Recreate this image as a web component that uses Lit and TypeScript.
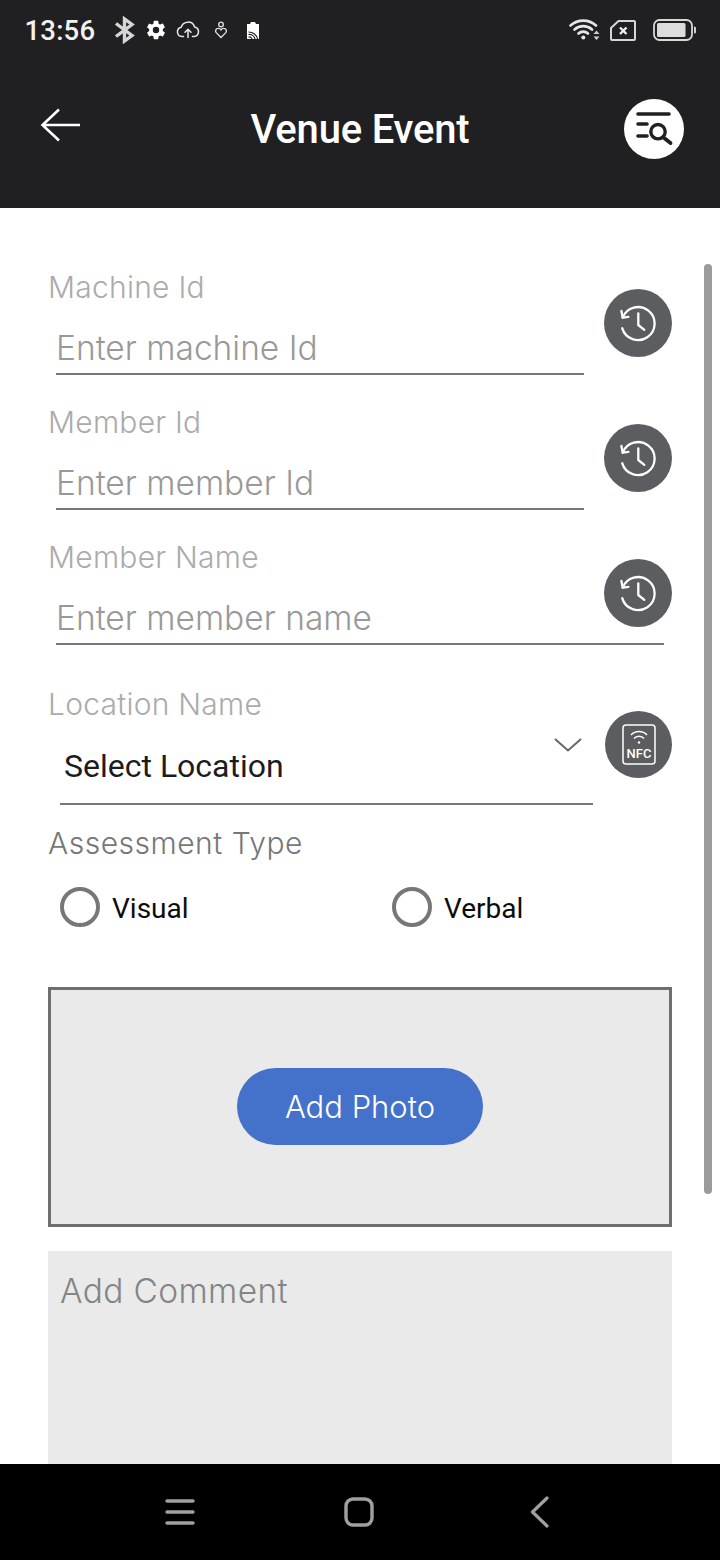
import { LitElement, html, css } from "lit";
import { customElement } from "lit/decorators.js";

const historyIcon = html`<svg class="ico" viewBox="0 0 40 40" width="40" height="40" fill="none" stroke="#fff" stroke-width="2.300" stroke-linecap="round" stroke-linejoin="round">
  <path d="M4.700 14.700 A16.500 16.500 0 1 1 4.300 25.300" />
  <path d="M3.400 8 L4.700 14.700 L10.400 13.800" />
  <path d="M20.300 10.300 V22 L26.300 26.800" />
</svg>`;

const fields = [
  { label: "Machine Id", ph: "Enter machine Id", wide: false },
  { label: "Member Id", ph: "Enter member Id", wide: false },
  { label: "Member Name", ph: "Enter member name", wide: true },
];

@customElement("app-root")
export class AppRoot extends LitElement {
  static styles = css`
    :host { display: block; width: 720px; height: 1560px; overflow: hidden; position: relative; background: #fff; font-family: "Inter", "Liberation Sans", sans-serif; }
    .top { background: #202022; height: 208px; display: flex; flex-direction: column; }
    .status { height: 60px; display: flex; align-items: center; padding: 0 0 0 24.500px; color: #fff; font-family: Roboto, sans-serif; }
    .time { font-size: 27.500px; font-weight: 500; color: #f2f2f2; width: 88.500px; letter-spacing: .2px; }
    .s-left { display: flex; align-items: center; gap: 0; }
    .s-right { margin-left: auto; display: flex; align-items: center; padding-right: 24px; }
    .s-left svg, .s-right svg { display: block; flex: none; }
    .bar { flex: 1; display: flex; align-items: center; justify-content: space-between; padding: 0 36px 0 40px; }
    .title { font-family: Roboto, sans-serif; font-weight: 500; font-size: 40px; color: #fff; letter-spacing: -.2px; position: absolute; left: 0; right: 0; text-align: center; top: 106px; line-height: 48px; }
    .bar svg { display: block; }
    .bar .back { margin-top: -19px; }
    .bar .find { margin-top: -10px; }
    .form { height: 1256px; padding-top: 56px; box-sizing: border-box; position: relative; overflow: hidden; }
    .row { height: 135px; display: flex; padding: 0 48px; box-sizing: border-box; }
    .fieldcol { width: 536px; flex: none; }
    .label { font-size: 30px; line-height: 46px; color: #ababab; font-weight: 300; letter-spacing: .25px; }
    .input { margin: 16px 0 0 8px; height: 47px; line-height: 44px; font-size: 33.500px; font-weight: 300; color: #999; border-bottom: 2px solid #777; }
    .circle { width: 68px; height: 68px; border-radius: 50%; background: #5c5d60; display: flex; align-items: center; justify-content: center; flex: none; margin: 25px 0 0 20px; }
    .wide { width: 616px; }
    .over { margin-left: -60px; position: relative; }
    .selrow { height: 156px; padding: 12px 48px 0; display: flex; box-sizing: border-box; }
    .selcol { width: 545px; flex: none; position: relative; }
    .select { margin: 8px 0 0 12px; padding-left: 4px; height: 68px; font-family: Roboto, sans-serif; font-size: 32px; line-height: 62px; color: #1c1c1c; border-bottom: 2px solid #777; }
    .chev { position: absolute; right: 11px; top: 56px; }
    .nfc { margin: 30px 0 0 12px; width: 67px; height: 67px; }
    .atype { font-size: 30px; line-height: 46px; color: #777; font-weight: 300; padding-left: 48px; margin-top: -5px; letter-spacing: .5px; }
    .radios { display: flex; padding: 21px 0 0 60px; height: 40px; }
    .radio { display: flex; align-items: center; width: 332px; font-family: Roboto, sans-serif; font-size: 28px; color: #0c0c0c; flex: none; }
    .radio span:last-child { margin-top: 2px; }
    .dot { width: 40px; height: 40px; border: 4px solid #777; border-radius: 50%; box-sizing: border-box; margin-right: 12px; flex: none; }
    .photo { margin: 60px 48px 0; height: 240px; border: 3px solid #6f6f6f; background: #eaeaea; box-sizing: border-box; display: flex; align-items: center; justify-content: center; }
    .add { width: 246px; height: 77px; margin-top: -2px; border-radius: 39px; background: #4472ca; color: #fff; font-size: 31px; font-weight: 300; display: flex; align-items: center; justify-content: center; }
    .comment { margin: 24px 48px 0; height: 300px; background: #eaeaea; padding: 17px 12px; box-sizing: border-box; font-size: 33.500px; font-weight: 300; line-height: 46px; color: #858585; letter-spacing: .35px; }
    .scroll { position: absolute; left: 704px; top: 56px; width: 8px; height: 930px; border-radius: 4px; background: #9b9b9b; }
    .nav { height: 96px; background: #000; display: flex; align-items: center; position: relative; }
    .nav svg { position: absolute; display: block; }
  `;

  render() {
    return html`
      <div class="top">
        <div class="status">
          <span class="time">13:56</span>
          <div class="s-left">
            <svg width="24" height="28" viewBox="0 0 24 28" fill="none" stroke="#d6d6d6" stroke-width="3.400"><path d="M3 7.500 L19 19.500 L11.500 25 V3 L19 8.500 L3 20.500"/></svg>
            <svg style="margin-left:8px" width="22" height="22" viewBox="0 0 24 24" fill="#fff"><path fill-rule="evenodd" d="M19.400 13c.05-.3.1-.65.1-1s-.05-.7-.1-1l2.100-1.650a.5.5 0 0 0 .12-.64l-2-3.460a.5.5 0 0 0-.6-.22l-2.490 1a7.300 7.300 0 0 0-1.690-.98l-.38-2.650A.49.49 0 0 0 14 2h-4a.49.49 0 0 0-.49.42l-.38 2.650c-.61.25-1.170.59-1.690.98l-2.490-1a.49.49 0 0 0-.6.22l-2 3.460a.49.49 0 0 0 .12.64L4.570 11c-.05.32-.07.66-.07 1s.02.68.07 1l-2.110 1.650a.5.5 0 0 0-.12.64l2 3.460c.12.22.39.3.6.22l2.490-1c.52.4 1.080.73 1.690.98l.38 2.650c.03.24.24.42.49.42h4c.25 0 .46-.18.49-.42l.38-2.650c.61-.25 1.170-.59 1.690-.98l2.490 1c.23.08.49 0 .6-.22l2-3.460a.5.5 0 0 0-.12-.64L19.400 13zM12 15.500a3.500 3.500 0 1 1 0-7 3.500 3.500 0 0 1 0 7z"/></svg>
            <svg style="margin-left:9px" width="24" height="18" viewBox="0 0 24 18" fill="none" stroke="#e8e8e8" stroke-width="1.500" stroke-linecap="round" stroke-linejoin="round"><path d="M7.500 15.500H6a4.700 4.700 0 0 1-.8-9.300A7 7 0 0 1 18.600 6a4.800 4.800 0 0 1-.6 9.500h-1.500"/><path d="M12 16.500V8.500M9 11.200l3-3 3 3"/></svg>
            <svg style="margin-left:14px" width="14" height="18" viewBox="0 0 14 18" fill="none" stroke="#dcdcdc" stroke-width="1.400"><circle cx="7" cy="3.400" r="2.300"/><path d="M7 16.500 L2 11.400 a2.600 2.600 0 0 1 2-4 a3 3 0 0 1 3 1.400 a3 3 0 0 1 3-1.400 a2.600 2.600 0 0 1 2 4 z"/></svg>
            <svg style="margin-left:18px" width="14" height="19" viewBox="0 0 14 19"><path d="M1 3 L4 3 L5 1 L9 1 L10 3 L13 3 L13 18 L1 18 Z" fill="#fff"/><path d="M2.500 11a9 8 0 0 1 9 7M2.500 13.500a6 6 0 0 1 6.500 4.500M2.500 16a3 3 0 0 1 3.500 2" fill="none" stroke="#222" stroke-width="1.200"/></svg>
          </div>
          <div class="s-right">
            <svg width="31" height="22" viewBox="0 0 31 22" fill="none" stroke="#e6e6e6" stroke-width="2.600" stroke-linecap="round"><path d="M1.500 6.500 A19 19 0 0 1 27 6.500"/><path d="M5.500 10.500 A13 13 0 0 1 23 10.500"/><path d="M9.500 14.500 A7 7 0 0 1 19 14.500"/><circle cx="14.300" cy="18.500" r="2" fill="#e6e6e6" stroke="none"/><path d="M24.500 15 l3 -3.500 l3 3.500z M24.500 17.500 l3 3.500 l3 -3.500z" fill="#cfcfcf" stroke="none"/></svg>
            <svg style="margin-left:10px" width="26" height="21" viewBox="0 0 26 21" fill="none" stroke="#d6d6d6" stroke-width="2"><path d="M8.500 1 H24 a1 1 0 0 1 1 1 V19 a1 1 0 0 1 -1 1 H2 a1 1 0 0 1 -1 -1 V8 Z" stroke-linejoin="round"/><path d="M10 7.500 L16.500 14 M16.500 7.500 L10 14" stroke-width="2.400" stroke="#eee"/></svg>
            <svg style="margin-left:17px" width="43" height="22" viewBox="0 0 43 22"><rect x="1" y="1" width="38" height="20" rx="5.500" fill="none" stroke="#d8d8d8" stroke-width="1.800"/><rect x="4" y="4" width="28.500" height="14" rx="1.500" fill="#dcdcdc"/><path d="M41 7.500 h.5 a1.500 1.500 0 0 1 1.500 1.500 v4 a1.500 1.500 0 0 1 -1.500 1.500 h-.5 z" fill="#d0d0d0"/></svg>
          </div>
        </div>
        <div class="bar">
          <svg class="back" width="42" height="36" viewBox="0 0 42 36" fill="none" stroke="#fff" stroke-width="2.600"><path d="M40 18 H3 M19 2.500 L2.500 18 L19 33.500"/></svg>
          <div class="title">Venue Event</div>
          <svg class="find" width="60" height="60" viewBox="0 0 60 60" stroke="#202022" fill="none" stroke-linecap="round"><circle cx="30" cy="30" r="30" fill="#fff" stroke="none"/><path d="M14 15 H45" stroke-width="3.600"/><path d="M14 25 H23 M14 37 H23" stroke-width="3.600"/><circle cx="34" cy="32.700" r="7.200" stroke-width="3.400"/><path d="M39.500 38.500 L46.500 44" stroke-width="3.800"/></svg>
        </div>
      </div>
      <div class="form">
        ${fields.map(
          (f) => html`<div class="row">
            <div class="fieldcol ${f.wide ? "wide" : ""}">
              <div class="label">${f.label}</div>
              <div class="input">${f.ph}</div>
            </div>
            <div class="circle ${f.wide ? "over" : ""}">${historyIcon}</div>
          </div>`
        )}
        <div class="selrow">
          <div class="selcol">
            <div class="label">Location Name</div>
            <div class="select">Select Location</div>
            <svg class="chev" width="28" height="16" viewBox="0 0 28 16" fill="none" stroke="#666" stroke-width="2"><path d="M1 2 L14 13.500 L27 2"/></svg>
          </div>
          <div class="circle nfc">
            <svg width="36" height="42" viewBox="0 0 36 42" fill="none" stroke="#fff"><rect x="2" y="1" width="32" height="39" rx="3" stroke-width="1.500"/><path d="M10 11 a11 11 0 0 1 16 0 M13 14.500 a6.500 6.500 0 0 1 10 0" stroke-width="1.500"/><circle cx="18" cy="18.500" r="1.200" fill="#fff" stroke="none"/><text x="18" y="34" text-anchor="middle" font-family="Roboto, sans-serif" font-size="13" font-weight="500" fill="#fff" stroke="none">NFC</text></svg>
          </div>
        </div>
        <div class="atype">Assessment Type</div>
        <div class="radios">
          <div class="radio"><span class="dot"></span><span>Visual</span></div>
          <div class="radio"><span class="dot"></span><span>Verbal</span></div>
        </div>
        <div class="photo"><div class="add">Add Photo</div></div>
        <div class="comment">Add Comment</div>
        <div class="scroll"></div>
      </div>
      <div class="nav">
        <svg style="left:165px;top:34px" width="30" height="28" viewBox="0 0 30 28" stroke="#a0a0a0" stroke-width="3.400" stroke-linecap="round"><path d="M2 3 H28 M2 14 H28 M2 25 H28"/></svg>
        <svg style="left:344px;top:33px" width="30" height="30" viewBox="0 0 30 30" fill="none" stroke="#a0a0a0" stroke-width="3.400"><rect x="2" y="2" width="26" height="26" rx="7"/></svg>
        <svg style="left:530px;top:32px" width="20" height="32" viewBox="0 0 20 32" fill="none" stroke="#a0a0a0" stroke-width="3.200" stroke-linecap="round" stroke-linejoin="round"><path d="M17 2 L2.500 16 L17 30"/></svg>
      </div>
    `;
  }
}
